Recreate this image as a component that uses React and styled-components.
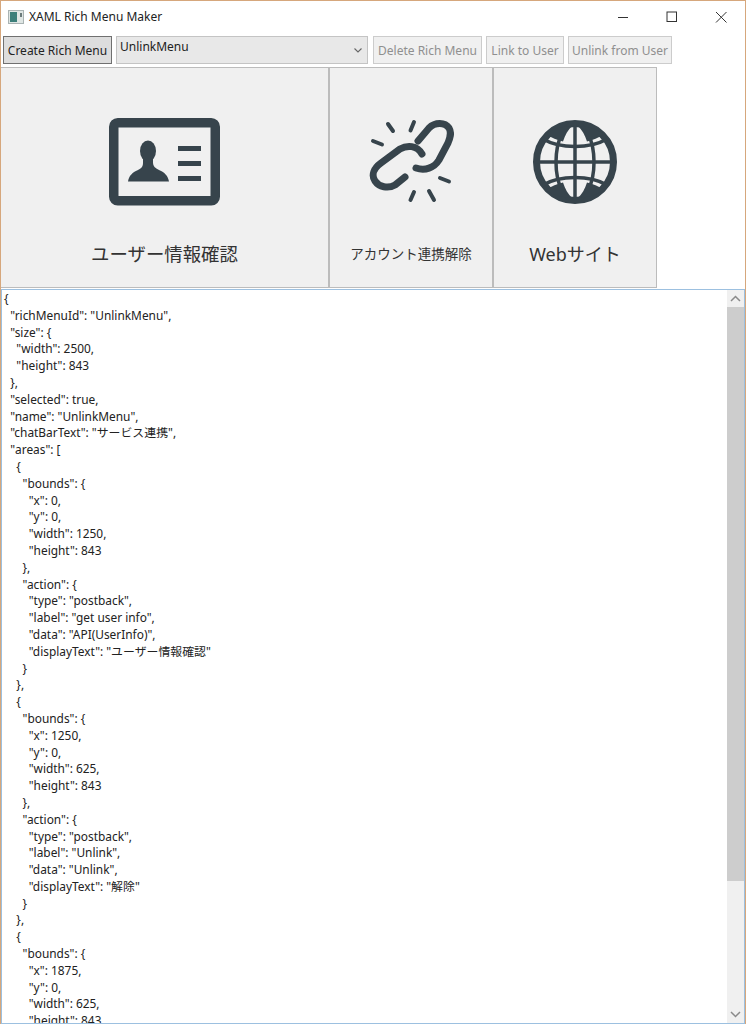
import React from 'react';
import styled, { createGlobalStyle } from 'styled-components';

const FONT = '"Noto Sans", "Noto Sans CJK JP", sans-serif';

const jsonText = `{
  "richMenuId": "UnlinkMenu",
  "size": {
    "width": 2500,
    "height": 843
  },
  "selected": true,
  "name": "UnlinkMenu",
  "chatBarText": "サービス連携",
  "areas": [
    {
      "bounds": {
        "x": 0,
        "y": 0,
        "width": 1250,
        "height": 843
      },
      "action": {
        "type": "postback",
        "label": "get user info",
        "data": "API(UserInfo)",
        "displayText": "ユーザー情報確認"
      }
    },
    {
      "bounds": {
        "x": 1250,
        "y": 0,
        "width": 625,
        "height": 843
      },
      "action": {
        "type": "postback",
        "label": "Unlink",
        "data": "Unlink",
        "displayText": "解除"
      }
    },
    {
      "bounds": {
        "x": 1875,
        "y": 0,
        "width": 625,
        "height": 843
      }`;

const App = () => {
  return (
    <>
      <GlobalStyle />
      <Window>
        <TitleBar>
          <AppIcon viewBox="0 0 16 14">
            <rect x="0.5" y="0.5" width="15" height="13" fill="#dfe6e4" stroke="#a9b3b3" />
            <rect x="2" y="2" width="7" height="10" fill="#3c7f7a" />
            <rect x="12" y="3" width="2" height="4" fill="#6a7a7a" />
          </AppIcon>
          <Title>XAML Rich Menu Maker</Title>
          <WindowControls>
            <ControlSlot>
              <svg width="12" height="12" viewBox="0 0 12 12">
                <path d="M1 6.5h10" stroke="#333" fill="none" />
              </svg>
            </ControlSlot>
            <ControlSlot>
              <svg width="12" height="12" viewBox="0 0 12 12">
                <rect x="1" y="1" width="9.5" height="9.5" stroke="#333" fill="none" />
              </svg>
            </ControlSlot>
            <ControlSlot>
              <svg width="12" height="12" viewBox="0 0 12 12">
                <path d="M1 1l10.5 10.5M11.5 1L1 11.5" stroke="#333" fill="none" />
              </svg>
            </ControlSlot>
          </WindowControls>
        </TitleBar>

        <Toolbar>
          <ToolButton $width={109} $active>Create Rich Menu</ToolButton>
          <MenuSelect>
            UnlinkMenu
            <svg width="8" height="5" viewBox="0 0 8 5">
              <path d="M0.500 0.500L4 4l3.500-3.500" stroke="#666" strokeWidth="1.100" fill="none" />
            </svg>
          </MenuSelect>
          <ToolButton $width={109} $disabled>Delete Rich Menu</ToolButton>
          <ToolButton $width={78} $disabled>Link to User</ToolButton>
          <ToolButton $width={104} $disabled>Unlink from User</ToolButton>
        </Toolbar>

        <MenuImage>
          <Tile $width={329}>
            <IconSlot>
              <svg width="111" height="88" viewBox="0 0 111 88">
                <rect x="4.75" y="4.75" width="101.5" height="78" rx="4" fill="none" stroke="#37444c" strokeWidth="9.5" />
                <ellipse cx="39" cy="33" rx="8" ry="10.5" fill="#37444c" />
                <path d="M34 40h10v5c0 3 2 5 6 7 6 2.500 9 6 10 11.500H19c1-5.500 4-9 10-11.500 4-2 5-4 5-7z" fill="#37444c" />
                <path d="M69 30.500h23M69 45.500h23M69 60.500h23" stroke="#37444c" strokeWidth="5" fill="none" />
              </svg>
            </IconSlot>
            <TileLabel $size={18.4}>ユーザー情報確認</TileLabel>
          </Tile>
          <Tile $width={164}>
            <IconSlot>
              <svg width="85" height="86" viewBox="0 0 85 86">
                <g fill="none" stroke="#37444c" strokeLinecap="round">
                  <path d="M49 22L60 9C66 3 76 3 80 9C83 14 81 19 79 24L70 41C65 49 56 52 47 49" strokeWidth="7" />
                  <path d="M53 35C48 26 38 26 31 30L12 44C5 49 2 56 6 62C10 68 19 70 26 66L36 58" strokeWidth="7" />
                  <path d="M19 5L24 12M45 3L41.500 11.500M4 22L13 25.500M71 59L80 62.500M45 73L41.500 81M60 72L65 81" strokeWidth="4" />
                </g>
              </svg>
            </IconSlot>
            <TileLabel $size={13.5}>アカウント連携解除</TileLabel>
          </Tile>
          <Tile $width={164}>
            <IconSlot>
              <svg width="86" height="86" viewBox="0 0 86 86">
                <g fill="none" stroke="#37444c">
                  <circle cx="43" cy="43" r="38.500" strokeWidth="7" />
                  <ellipse cx="43" cy="43" rx="19" ry="39" strokeWidth="3.500" />
                  <path d="M43 4v78M4 43h78" strokeWidth="3.500" />
                  <path d="M11 20C28 30 58 30 75 20M11 66C28 56 58 56 75 66" strokeWidth="3.500" />
                </g>
                <path d="M14 15C20 19 25 21 31 22.500C33 16 36 11 40 7C30 7.500 21 10 14 15zM72 15C66 19 61 21 55 22.500C53 16 50 11 46 7C56 7.500 65 10 72 15zM14 71C20 67 25 65 31 63.500C33 70 36 75 40 79C30 78.500 21 76 14 71zM72 71C66 67 61 65 55 63.500C53 70 50 75 46 79C56 78.500 65 76 72 71z" fill="#37444c" />
              </svg>
            </IconSlot>
            <TileLabel $size={18}>Webサイト</TileLabel>
          </Tile>
        </MenuImage>

        <JsonBox>
          <JsonText>{jsonText}</JsonText>
          <ScrollBar>
            <ScrollArrow>
              <svg width="11" height="7" viewBox="0 0 11 7">
                <path d="M1 6l4.500-4.500L10 6" stroke="#8a8a8a" strokeWidth="1.500" fill="none" />
              </svg>
            </ScrollArrow>
            <ScrollTrack>
              <ScrollThumb />
            </ScrollTrack>
            <ScrollArrow>
              <svg width="11" height="7" viewBox="0 0 11 7">
                <path d="M1 1l4.500 4.500L10 1" stroke="#8a8a8a" strokeWidth="1.500" fill="none" />
              </svg>
            </ScrollArrow>
          </ScrollBar>
        </JsonBox>
      </Window>
    </>
  );
};

const GlobalStyle = createGlobalStyle`
  html, body {
    margin: 0;
    padding: 0;
    background: #fff;
  }
`;

const Window = styled.div`
  box-sizing: border-box;
  width: 746px;
  height: 1024px;
  display: flex;
  flex-direction: column;
  overflow: hidden;
  background: #fff;
  border: 1px solid #d6a77c;
  border-bottom: none;
  font-family: ${FONT};
  color: #222;
`;

const TitleBar = styled.div`
  height: 31px;
  flex-shrink: 0;
  display: flex;
  align-items: center;
  padding-left: 7px;
`;

const AppIcon = styled.svg`
  width: 16px;
  height: 14px;
  margin-right: 5px;
`;

const Title = styled.div`
  font-size: 12px;
  color: #222;
`;

const WindowControls = styled.div`
  margin-left: auto;
  display: flex;
`;

const ControlSlot = styled.div`
  width: 49px;
  height: 30px;
  display: flex;
  align-items: center;
  justify-content: center;
`;

const Toolbar = styled.div`
  height: 28px;
  flex-shrink: 0;
  display: flex;
  gap: 4px;
  padding: 4px 0 0 2px;
  margin-bottom: 3px;
`;

const ToolButton = styled.div`
  box-sizing: border-box;
  width: ${(p) => p.$width}px;
  height: 28px;
  display: flex;
  align-items: center;
  justify-content: center;
  white-space: nowrap;
  font-size: 12px;
  background: ${(p) => (p.$active ? '#dddddd' : '#f0f0f0')};
  border: 1px solid ${(p) => (p.$active ? '#707070' : '#cccccc')};
  color: ${(p) => (p.$disabled ? '#8f8f8f' : '#222')};
`;

const MenuSelect = styled.div`
  box-sizing: border-box;
  width: 252px;
  height: 28px;
  margin-right: 1px;
  display: flex;
  justify-content: space-between;
  padding: 1px 5px 0 3px;
  font-size: 12px;
  background: #e8e8e8;
  border: 1px solid #c4c4c4;

  svg {
    align-self: center;
    margin-bottom: 1px;
  }
`;

const MenuImage = styled.div`
  height: 221px;
  flex-shrink: 0;
  display: flex;
  margin-bottom: 1px;
  margin-left: -1px;
`;

const Tile = styled.div`
  box-sizing: border-box;
  width: ${(p) => p.$width}px;
  height: 221px;
  padding-top: 49px;
  display: flex;
  flex-direction: column;
  align-items: center;
  background: #f0f0f0;
  border: 1px solid #bcbcbc;
`;

const IconSlot = styled.div`
  height: 90px;
  display: flex;
  align-items: center;
  justify-content: center;
`;

const TileLabel = styled.div`
  margin-top: 32px;
  height: 30px;
  line-height: 30px;
  font-size: ${(p) => p.$size}px;
  white-space: nowrap;
  color: #333;
`;

const JsonBox = styled.div`
  box-sizing: border-box;
  flex: 1;
  min-height: 0;
  display: flex;
  border: 1px solid #9cc0e0;
  background: #fff;
`;

const JsonText = styled.pre`
  flex: 1;
  margin: 0;
  padding: 0 0 0 2px;
  overflow: hidden;
  font-family: ${FONT};
  font-size: 11.9px;
  line-height: 16.8px;
  color: #222;
`;

const ScrollBar = styled.div`
  width: 17px;
  display: flex;
  flex-direction: column;
  background: #f0f0f0;
`;

const ScrollArrow = styled.div`
  height: 17px;
  flex-shrink: 0;
  display: flex;
  align-items: center;
  justify-content: center;
`;

const ScrollTrack = styled.div`
  flex: 1;
`;

const ScrollThumb = styled.div`
  height: 574px;
  background: #cdcdcd;
`;

export default App;
